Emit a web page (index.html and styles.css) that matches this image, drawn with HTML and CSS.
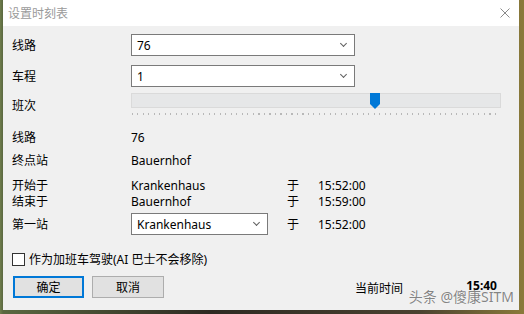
FILE: index.html
```html
<!DOCTYPE html>
<html lang="zh-CN">
<head>
  <meta charset="UTF-8" />
  <title>设置时刻表</title>
  <link rel="stylesheet" href="styles.css">
</head>
<body>

  <div class="window">
    <div class="titlebar">
      <span class="title">设置时刻表</span>
      <span class="close">
        <svg width="10" height="10" viewBox="0 0 10 10"><path d="M0.5 0.5 L9.5 9.5 M9.5 0.5 L0.5 9.5" stroke="#8a8a8a" stroke-width="1" fill="none"/></svg>
      </span>
    </div>

    <div class="content">
      <div class="row r-route">
        <div class="label">线路</div>
        <div class="combo wide"><span>76</span><i class="chev"></i></div>
      </div>

      <div class="row r-trip">
        <div class="label">车程</div>
        <div class="combo wide"><span>1</span><i class="chev"></i></div>
      </div>

      <div class="row r-slider">
        <div class="label">班次</div>
        <div class="slider">
          <div class="track">
            <svg class="thumb" width="10" height="16" viewBox="0 0 10 16"><path d="M0 0 H10 V11 L5 16 L0 11 Z" fill="#0078d7"/></svg>
          </div>
          <div class="ticks"></div>
        </div>
      </div>

      <div class="row text r-line">
        <div class="label">线路</div>
        <div class="val">76</div>
      </div>

      <div class="row text r-term">
        <div class="label">终点站</div>
        <div class="val">Bauernhof</div>
      </div>

      <div class="row text r-start">
        <div class="label">开始于</div>
        <div class="val">Krankenhaus</div>
        <div class="yu">于</div>
        <div class="time">15:52:00</div>
      </div>

      <div class="row text">
        <div class="label">结束于</div>
        <div class="val">Bauernhof</div>
        <div class="yu">于</div>
        <div class="time">15:59:00</div>
      </div>

      <div class="row r-first">
        <div class="label">第一站</div>
        <div class="val"><div class="combo short"><span>Krankenhaus</span><i class="chev"></i></div></div>
        <div class="yu">于</div>
        <div class="time">15:52:00</div>
      </div>

      <label class="row check">
        <span class="box"></span>
        <span>作为加班车驾驶(AI 巴士不会移除)</span>
      </label>

      <div class="footer">
        <button class="btn primary">确定</button>
        <button class="btn">取消</button>
        <span class="now-label">当前时间</span>
        <span class="now">15:40</span>
      </div>
    </div>

    <div class="watermark">头条 @傻康SITM</div>
  </div>

</body>
</html>
```

FILE: styles.css
```css
body {
  margin: 0;
  width: 524px;
  height: 314px;
  overflow: hidden;
  background: linear-gradient(90deg, #6f7d4c 0, #5a6840 3px, #2d2a22 40%, #4a4230 80%, #8a7a3a 100%);
  font-family: "Noto Sans", "Noto Sans CJK SC", sans-serif;
  font-size: 12px;
  color: #000;
}
.window {
  position: relative;
  margin-left: 3px;
  width: 516px;
  height: 310px;
  background: #f0f0f0;
}
.titlebar {
  height: 26px;
  background: #fff;
  display: flex;
  align-items: center;
  justify-content: space-between;
}
.title {
  padding-left: 5px;
  color: #9a9a9a;
  font-size: 12px;
}
.close {
  width: 28px;
  display: flex;
  justify-content: center;
}
.content {
  padding-left: 9px;
}
.row {
  display: flex;
  align-items: center;
  height: 22px;
}
.row.text {
  height: 16px;
  line-height: 16px;
}
.label {
  width: 119px;
  flex: none;
}
.val {
  width: 156px;
  flex: none;
}
.yu {
  width: 31px;
  flex: none;
}
.r-route { margin-top: 8px; }
.r-trip { margin-top: 9px; }
.r-slider { margin-top: 6px; height: 24px; }
.r-line { margin-top: 13px; }
.r-term { margin-top: 7px; }
.r-start { margin-top: 9px; }
.r-first { margin-top: 3px; }

.combo {
  box-sizing: border-box;
  height: 22px;
  border: 1px solid #7a7a7a;
  background: #fff;
  display: flex;
  align-items: center;
  justify-content: space-between;
  padding: 0 6px 0 5px;
}
.combo.wide { width: 224px; }
.combo.short { width: 137px; }
.chev {
  width: 4px;
  height: 4px;
  border-right: 1px solid #606060;
  border-bottom: 1px solid #606060;
  transform: rotate(45deg);
  margin-top: -3px;
  margin-right: 2px;
}

.slider {
  width: 370px;
  height: 24px;
}
.track {
  position: relative;
  box-sizing: border-box;
  height: 15px;
  background: #e6e7e8;
  border: 1px solid #dadada;
}
.thumb {
  position: absolute;
  left: 238px;
  top: -1px;
}
.ticks {
  margin: 5px 2px 0 1px;
  height: 2px;
  background: repeating-linear-gradient(90deg, #b8b8b8 0, #b8b8b8 1px, transparent 1px, transparent 5.5px);
}

.check {
  margin-top: 16px;
  height: 16px;
  gap: 4px;
}
.box {
  box-sizing: border-box;
  width: 13px;
  height: 13px;
  border: 1px solid #333;
  background: #fff;
}

.footer {
  margin-top: 9px;
  display: flex;
  align-items: center;
  height: 22px;
  padding-right: 22px;
}
.btn {
  box-sizing: border-box;
  width: 72px;
  height: 22px;
  margin: 0 8px 0 0;
  padding: 0;
  font: inherit;
  background: #e1e1e1;
  border: 1px solid #adadad;
  color: #000;
}
.btn.primary {
  border: 2px solid #0078d7;
  width: 71px;
  margin-left: 1px;
  margin-right: 8px;
}
.now-label {
  margin-left: 183px;
  margin-top: 1px;
}
.now {
  margin-left: auto;
  font-weight: bold;
  margin-top: -4px;
}
.watermark {
  position: absolute;
  right: 5px;
  bottom: 4px;
  font-size: 14px;
  color: rgba(110, 110, 110, 0.85);
  text-shadow: 0 0 1px #fff;
}
```
